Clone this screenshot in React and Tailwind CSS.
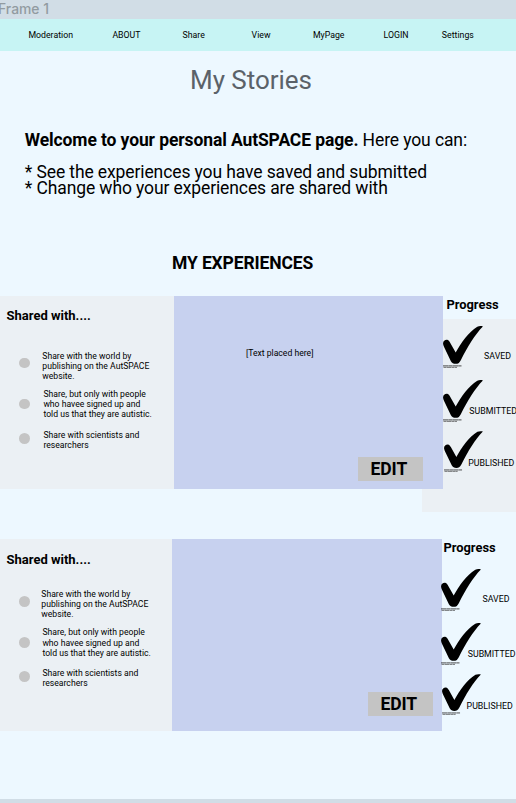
const navItems = ['Moderation', 'ABOUT', 'Share', 'View', 'MyPage', 'LOGIN', 'Settings'];

function Check({ className }) {
  return (
    <svg className={className} viewBox="0 0 40 43" fill="none" aria-hidden="true">
      <path
        d="M0.1 18C-0.3 14.8 2.6 13.3 4.8 14C6 14.4 6.6 15.7 7.3 17L12.7 26.6C18 16.8 25.5 6 34.3 0.7C36 -0.1 38.6 0 39.9 0.4C32.2 8 24.4 21 17.8 34.2C16.2 37.2 15 37.8 12.8 37.8C10.2 37.8 9.2 37.4 7.9 35.2L1.2 21.2C0.6 20 0.2 19 0.1 18Z"
        fill="#000"
      />
      <path d="M0 39.9H18.5" stroke="#222" strokeWidth="0.8" strokeDasharray="5.6 0.2 3.4 0.2" />
      <path d="M0.5 41.4H14" stroke="#444" strokeWidth="0.7" strokeDasharray="2.7 0.3 4.8 0.3" />
    </svg>
  );
}

function Option({ className, dotClass, textClass, lines }) {
  return (
    <div className={`flex ${className}`}>
      <span className={`size-[10.5px] shrink-0 rounded-full bg-[#c4c4c4] ${dotClass}`} />
      <p className={`whitespace-nowrap text-[8.65px] leading-[10.1px] ${textClass}`}>
        {lines.map((line) => (
          <span key={line} className="block">{line}</span>
        ))}
      </p>
    </div>
  );
}

function SharedWith({ second }) {
  return (
    <div className={`shrink-0 bg-[#ebf0f4] ${second ? 'w-[172px] pt-[13px]' : 'w-[173.6px] pt-[11.5px]'}`}>
      <h3 className="h-4 pl-[6.5px] text-[13px] leading-4 font-bold">Shared with....</h3>
      <div className={`pl-[19.3px] ${second ? 'pt-[21.5px]' : 'pt-[27.3px]'}`}>
        <Option
          className="h-[38.2px]"
          dotClass={second ? 'mt-[7.2px]' : 'mt-[6.8px]'}
          textClass={second ? 'ml-[11.5px]' : 'ml-[12.5px]'}
          lines={['Share with the world by', 'publishing on the AutSPACE', 'website.']}
        />
        <Option
          className="h-[40.6px]"
          dotClass="mt-[9.7px]"
          textClass={second ? 'ml-[12.6px]' : 'ml-[13.6px]'}
          lines={['Share, but only with people', 'who havee signed up and', 'told us that they are autistic.']}
        />
        <Option
          dotClass="mt-[3.2px]"
          textClass={second ? 'ml-[12.6px]' : 'ml-[13.6px]'}
          lines={['Share with scientists and', 'researchers']}
        />
      </div>
    </div>
  );
}

function Progress({ second }) {
  return (
    <div className="min-w-0 flex-1 whitespace-nowrap">
      <h3 className={`text-[12.9px] leading-4 font-bold ${second ? 'mt-[1.5px] pl-[1.8px]' : 'mt-[0.5px] pl-[3.2px]'}`}>
        Progress
      </h3>
      <div className={`flex flex-col text-[8.8px] leading-[10px] ${second ? 'pt-[12.5px]' : 'pt-[13px]'}`}>
        <div className="flex h-[54.7px]">
          <Check className="-ml-[0.5px] h-[43px] w-10 shrink-0" />
          <span className="mt-[25px] ml-[1.4px]">SAVED</span>
        </div>
        <div className="flex h-[51px]">
          <Check className="-ml-[0.5px] h-[43px] w-10 shrink-0" />
          <span className="mt-[25.5px] -ml-[13.4px]">SUBMITTED</span>
        </div>
        <div className="flex">
          <Check className="ml-[0.5px] h-[42px] w-[39px] shrink-0" />
          <span className="mt-[26.5px] -ml-[14.5px]">PUBLISHED</span>
        </div>
      </div>
    </div>
  );
}

function Experience({ second }) {
  return (
    <section className={`relative isolate flex ${second ? 'mt-[49.5px] h-[192.5px]' : 'mt-[22px] h-[193px]'}`}>
      {!second && <div className="absolute top-[22.5px] right-0 -z-10 h-[193px] w-[94px] bg-[#ebf0f4]" />}
      <SharedWith second={second} />
      <div className="flex w-[269.6px] shrink-0 flex-col justify-between bg-[#c7d1ef]">
        <p className="pt-[51px] pl-[72.3px] text-[8.65px] leading-[12px]">{second ? '' : '[Text placed here]'}</p>
        <button
          className={`h-6 w-[64.5px] bg-[#c4c4c4] pr-[3px] text-[17.5px] leading-[25px] font-bold tracking-[-0.05px] ${
            second ? 'mb-[15px] ml-[196px]' : 'mb-[8px] ml-[184.5px]'
          }`}
        >
          EDIT
        </button>
      </div>
      <Progress second={second} />
    </section>
  );
}

export default function App() {
  return (
    <div className="flex h-[803px] w-[516px] flex-col overflow-hidden bg-[#edf8ff] font-['Roboto',sans-serif] text-black">
      <div className="h-[19px] shrink-0 bg-[#d1dde6]">
        <div className="-ml-[2px] font-['Inter',sans-serif] text-[13.9px] leading-[18px] font-medium text-[#929ba1]">Frame 1</div>
      </div>
      <nav className="grid h-8 shrink-0 grid-cols-[84px_70.2px_69px_61.3px_70.7px_58.3px_1fr] items-center bg-[#c7f4f4] pt-[2px] pl-[28.4px] text-[8.75px]">
        {navItems.map((item) => (
          <a key={item}>{item}</a>
        ))}
      </nav>
      <main className="flex flex-1 flex-col">
        <h1 className="mt-[13px] pl-[190px] text-[26px] leading-8 tracking-[-0.05px] text-[#5b6269]">My Stories</h1>
        <div className="mt-[35.5px] pl-[24.8px] text-[17.5px] leading-[16.2px] tracking-[-0.11px]">
          <p className="whitespace-nowrap">
            <b>Welcome to your personal AutSPACE page.</b> Here you can:
          </p>
          <p className="mt-[16.2px] whitespace-nowrap">* See the experiences you have saved and submitted</p>
          <p className="whitespace-nowrap">* Change who your experiences are shared with</p>
        </div>
        <h2 className="mt-[56px] pl-[172px] text-[17.5px] leading-[22px] font-bold tracking-[-0.13px]">MY EXPERIENCES</h2>
        <Experience />
        <Experience second />
      </main>
      <div className="h-[4.5px] shrink-0 bg-[#d1dde6]" />
    </div>
  );
}
